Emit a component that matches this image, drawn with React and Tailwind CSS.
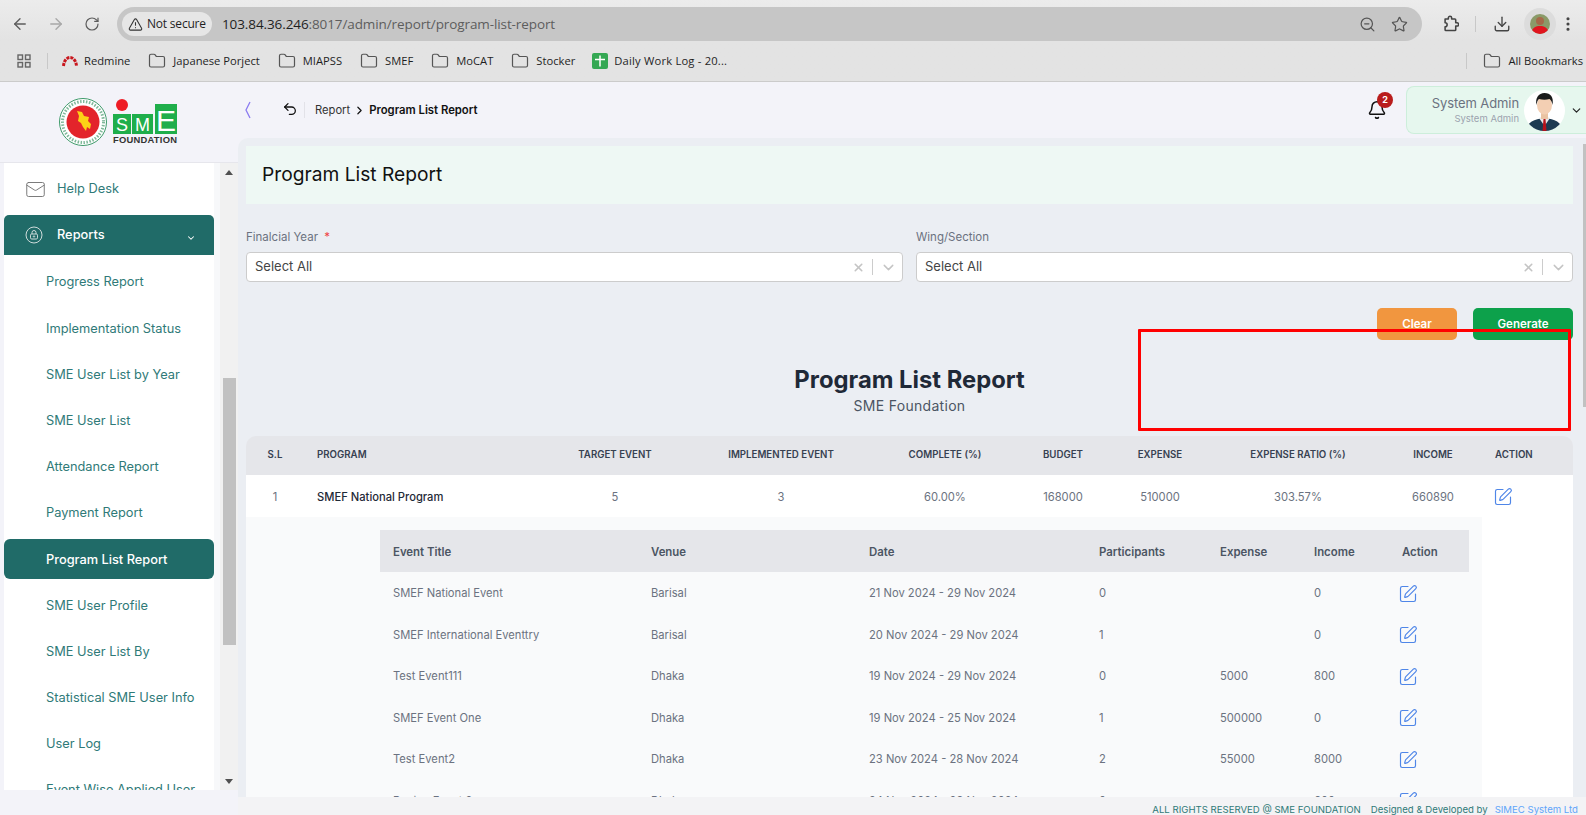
import React from "react";
import { ArrowLeft, ArrowRight, RotateCw, TriangleAlert, ZoomOut, Star, Download, EllipsisVertical, Folder, Undo2, ChevronRight, ChevronDown, Mail, X, SquarePen, Bell } from "lucide-react";

const sub = ["Progress Report","Implementation Status","SME User List by Year","SME User List","Attendance Report","Payment Report","Program List Report","SME User Profile","SME User List By","Statistical SME User Info","User Log","Event Wise Applied User"];
const mainCols = "grid grid-cols-[58px_236px_150px_182px_146px_90px_104px_172px_98px_91px]";
const subCols = "grid grid-cols-[258px_218px_230px_121px_94px_88px_80px]";
const heads = ["TARGET EVENT","IMPLEMENTED EVENT","COMPLETE (%)","BUDGET","EXPENSE","EXPENSE RATIO (%)","INCOME"];
const vals = ["5","3","60.00%","168000","510000","303.57%","660890"];
const events = [
  ["SMEF National Event","Barisal","21 Nov 2024 - 29 Nov 2024","0","","0"],
  ["SMEF International Eventtry","Barisal","20 Nov 2024 - 29 Nov 2024","1","","0"],
  ["Test Event111","Dhaka","19 Nov 2024 - 29 Nov 2024","0","5000","800"],
  ["SMEF Event One","Dhaka","19 Nov 2024 - 25 Nov 2024","1","500000","0"],
  ["Test Event2","Dhaka","23 Nov 2024 - 28 Nov 2024","2","55000","8000"],
  ["Design Event 2","Dhaka","24 Nov 2024 - 29 Nov 2024","0","","600"],
];

function Bookmark({ label, className }) {
  return (
    <div className={"flex items-center gap-[7px] " + className}>
      <Folder size={18} strokeWidth={1.6} className="text-[#555]" />
      <span>{label}</span>
    </div>
  );
}

function Logo() {
  return (
    <svg width="130" height="56" viewBox="0 0 130 56" className="ml-[57px] mt-[3px]">
      <circle cx="26" cy="26" r="23.5" fill="#fff" stroke="#3f9b6b" strokeWidth="1" />
      <circle cx="26" cy="26" r="20.5" fill="none" stroke="#7fb89a" strokeWidth="3" strokeDasharray="1.5 1.5" />
      <circle cx="26" cy="26" r="16.5" fill="#e3242b" />
      <path d="M20 15l5 1 2 4 5 1-1 4 3 3-1 5-3-2-1 4-3-4-2-4-3-2 1-5z" fill="#fcd116" />
      <circle cx="65" cy="9" r="6" fill="#ee1c25" />
      <rect x="56" y="18" width="18" height="20" fill="#1fae4b" />
      <rect x="75" y="18" width="21" height="20" fill="#1fae4b" />
      <rect x="98" y="8" width="22" height="30" fill="#1fae4b" />
      <text x="65" y="35" textAnchor="middle" fontSize="18" fill="#fff" fontFamily="Liberation Sans">S</text>
      <text x="85.5" y="35" textAnchor="middle" fontSize="18" fill="#fff" fontFamily="Liberation Sans">M</text>
      <text x="109" y="35" textAnchor="middle" fontSize="30" fill="#fff" fontFamily="Liberation Sans">E</text>
      <text x="56" y="47" fontSize="9.4" fontWeight="700" fill="#333" fontFamily="Liberation Sans" textLength="64">FOUNDATION</text>
    </svg>
  );
}

function Avatar() {
  return (
    <svg width="41" height="41" viewBox="0 0 41 41" className="shrink-0">
      <defs><clipPath id="av"><circle cx="20.5" cy="20.5" r="20.5" /></clipPath></defs>
      <g clipPath="url(#av)">
        <rect width="41" height="41" fill="#fff" />
        <path d="M2 41c1-9 8-12 18.500-13 10.500 1 17 4 18.500 13z" fill="#1d3a52" />
        <path d="M15 28l5.500 8 5.500-8-5.500-2z" fill="#e8e8e8" />
        <path d="M19.500 29h2l1 12h-4z" fill="#b5121b" />
        <rect x="17" y="21" width="7" height="8" fill="#eac3a2" />
        <ellipse cx="20.500" cy="15" rx="7.500" ry="9.500" fill="#f3cfb3" />
        <path d="M12.500 15c-1.500-7 2-12 8-12s9.500 4 8 12c-.5-3-1.500-5-3-6-3 1-7 1-10.500 0-1.500 1-2 3-2.500 6z" fill="#1b1b1b" />
      </g>
    </svg>
  );
}

function Select() {
  return (
    <div className="flex h-[30px] items-center rounded-[4px] border border-[#cccccc] bg-white pl-[8px] pr-[5px] text-[13px] text-[#444]">
      <span className="flex-1">Select All</span>
      <X size={13} strokeWidth={3} className="text-[#c4c4c4]" />
      <span className="mx-[7px] h-[16px] w-px bg-[#cccccc]" />
      <ChevronDown size={17} strokeWidth={2} className="text-[#c4c4c4]" />
    </div>
  );
}

function EditIcon() {
  return <SquarePen size={20} strokeWidth={1.4} className="text-[#4f86e8]" />;
}

export default function App() {
  return (
    <div className="flex h-[815px] w-full flex-col overflow-hidden bg-[#f3f3f9] font-['Inter',sans-serif]">
      {/* Browser chrome */}
      <div className="h-[82px] shrink-0 border-b border-[#cbcbcb] bg-linear-to-b from-[#ececec] via-[#e3e3e3] to-[#e3e3e3] font-['Open_Sans',sans-serif] text-[#1f1f1f]">
        <div className="flex h-[48px] items-center">
          <ArrowLeft size={18} strokeWidth={1.8} className="ml-[11px] text-[#5c5c5c]" />
          <ArrowRight size={18} strokeWidth={1.8} className="ml-[18px] text-[#a8a8a8]" />
          <RotateCw size={16} strokeWidth={1.8} className="ml-[19px] text-[#5c5c5c]" />
          <div className="ml-[17px] flex h-[34px] w-[1305px] items-center rounded-full bg-[#c6c6c6] pl-[5px] pr-[14px]">
            <div className="flex h-[24px] w-[90px] items-center gap-[4px] rounded-full bg-[#e6e6e6] pl-[6px] text-[12px] font-medium tracking-[-0.2px]">
              <TriangleAlert size={15} strokeWidth={1.7} className="text-[#333]" />
              <span>Not secure</span>
            </div>
            <div className="ml-[10px] flex-1 text-[13.500px] tracking-[-0.1px] text-[#5d5d5d]">
              <span className="text-[#1f1f1f]">103.84.36.246</span>:8017/admin/report/program-list-report
            </div>
            <ZoomOut size={17} strokeWidth={1.7} className="text-[#555]" />
            <Star size={17} strokeWidth={1.7} className="ml-[15px] text-[#555]" />
          </div>
          <svg width="18" height="18" viewBox="0 0 22 22" className="ml-[19px]" fill="none" stroke="#444" strokeWidth="1.900" strokeLinejoin="round">
            <path d="M5 5h4V3.500a2 2 0 0 1 4 0V5h4a1 1 0 0 1 1 1v3.500h1.500a2 2 0 0 1 0 4H18V18a1 1 0 0 1-1 1H6a1 1 0 0 1-1-1v-3.500a2.500 2.500 0 0 0 0-5z" />
          </svg>
          <span className="ml-[16px] h-[16px] w-px bg-[#c8c8c8]" />
          <Download size={18} strokeWidth={1.8} className="ml-[17px] text-[#444]" />
          <div className="ml-[13px] flex h-[32px] w-[32px] items-center justify-center rounded-full bg-[#dcdcdc]">
            <svg width="20" height="20" viewBox="0 0 20 20">
              <defs><clipPath id="pf"><circle cx="10" cy="10" r="10" /></clipPath></defs>
              <g clipPath="url(#pf)">
                <rect width="20" height="20" fill="#8a9a68" />
                <circle cx="10" cy="7" r="4" fill="#a5694a" />
                <path d="M1 20c1-7 5-8 9-8s8 1 9 8z" fill="#e0141e" />
              </g>
            </svg>
          </div>
          <EllipsisVertical size={18} strokeWidth={2.2} className="ml-[3px] text-[#444]" />
        </div>
        <div className="flex h-[26px] items-center text-[11.200px]">
          <svg width="14" height="14" viewBox="0 0 14 14" className="ml-[17px]" fill="none" stroke="#666" strokeWidth="1.4">
            <rect x="1" y="1" width="4.500" height="4.500" />
            <rect x="8.500" y="1" width="4.500" height="4.500" />
            <rect x="1" y="8.500" width="4.500" height="4.500" />
            <rect x="8.500" y="8.500" width="4.500" height="4.500" />
          </svg>
          <span className="ml-[16px] h-[16px] w-px bg-[#c8c8c8]" />
          <svg width="16" height="11" viewBox="0 0 16 11" className="ml-[14px]" fill="none">
            <path d="M1.500 10C2 4.500 5 1.500 8 1.500S14 4.500 14.500 10" stroke="#c8161d" strokeWidth="3" strokeDasharray="3 1" />
          </svg>
          <span className="ml-[6px]">Redmine</span>
          <Bookmark label="Japanese Porject" className="ml-[18px]" />
          <Bookmark label="MIAPSS" className="ml-[18px]" />
          <Bookmark label="SMEF" className="ml-[18px]" />
          <Bookmark label="MoCAT" className="ml-[18px]" />
          <Bookmark label="Stocker" className="ml-[18px]" />
          <svg width="16" height="16" viewBox="0 0 16 16" className="ml-[17px]">
            <rect width="16" height="16" rx="2" fill="#34a853" />
            <path d="M3 6.500h10M8 2.500v11" stroke="#fff" strokeWidth="1.500" />
          </svg>
          <span className="ml-[6px] flex-1 tracking-[0.2px]">Daily Work Log - 20...</span>
          <span className="h-[16px] w-px bg-[#c8c8c8]" />
          <Bookmark label="All Bookmarks" className="ml-[16px] mr-[3px]" />
        </div>
      </div>

      <div className="flex min-h-0 flex-1">
        {/* Sidebar */}
        <aside className="w-[238px] shrink-0">
          <div className="flex h-[81px] items-center border-b border-[#e6e6ec]">
            <Logo />
          </div>
          <div className="flex h-[627px]">
            <nav className="ml-[4px] w-[210px] overflow-hidden bg-white pt-[5px] text-[12.800px] text-[#2f7a78]">
              <div className="mb-[7px] flex h-[40px] items-center pt-[2px]">
                <Mail size={21} strokeWidth={1.1} className="ml-[21px] text-[#777]" />
                <span className="ml-[11px]">Help Desk</span>
              </div>
              <div className="mb-[7px] flex h-[40px] items-center rounded-t-[5px] bg-[#206b68] font-medium text-white">
                <svg width="18" height="18" viewBox="0 0 18 18" className="ml-[21px]" fill="none" stroke="#cfdcdb" strokeWidth="1">
                  <circle cx="9" cy="9" r="8" />
                  <rect x="5.500" y="8" width="7" height="5" rx="1.200" />
                  <path d="M7 8V6.500a2 2 0 0 1 4 0V8" />
                  <circle cx="9" cy="10.500" r=".7" />
                </svg>
                <span className="ml-[14px] flex-1">Reports</span>
                <ChevronDown size={10} strokeWidth={2.5} className="mr-[18px] mt-[5px]" />
              </div>
              {sub.map((s) => (
                <div
                  key={s}
                  className={
                    s === "Program List Report"
                      ? "mb-[6.200px] flex h-[40px] items-center rounded-[6px] bg-[#206b68] pl-[42px] font-medium text-white"
                      : "mb-[6.200px] flex h-[40px] items-center pl-[42px]"
                  }
                >
                  {s}
                </div>
              ))}
            </nav>
            <div className="w-[6px] bg-[#f7f8fa]" />
            <div className="flex w-[18px] flex-col items-center bg-[#f1f1f1]">
              <div className="flex h-[18px] w-full items-center justify-center">
                <svg width="8" height="5" viewBox="0 0 8 5"><path d="M4 0l4 5H0z" fill="#505050" /></svg>
              </div>
              <div className="mt-[197px] h-[267px] w-[13px] bg-[#c1c1c1]" />
              <div className="flex-1" />
              <div className="flex h-[18px] w-full items-center justify-center">
                <svg width="8" height="5" viewBox="0 0 8 5"><path d="M4 5l4-5H0z" fill="#505050" /></svg>
              </div>
            </div>
          </div>
        </aside>

        {/* Main */}
        <div className="flex min-w-0 flex-1 flex-col">
          <header className="flex h-[56px] shrink-0 items-center">
            <svg width="6" height="18" viewBox="0 0 6 18" className="ml-[7px]" fill="none" stroke="#8b7bf0" strokeWidth="1.300">
              <path d="M5 1L1 9l4 8" />
            </svg>
            <Undo2 size={16} strokeWidth={1.9} className="ml-[31px] mb-[2px] text-[#111]" />
            <span className="ml-[6px] h-[16px] w-px bg-[#e2e2e8]" />
            <span className="ml-[10px] pt-[1px] text-[11.200px] text-[#333]">Report</span>
            <ChevronRight size={13} strokeWidth={2.2} className="ml-[3px] text-[#111]" />
            <span className="ml-[3px] flex-1 pt-[1px] text-[11.300px] font-semibold text-[#111]">Program List Report</span>
            <div className="relative mr-[19px]">
              <Bell size={20} strokeWidth={1.8} className="text-[#111]" />
              <span className="absolute -right-[6px] -top-[8px] flex h-[16px] w-[16px] items-center justify-center rounded-full bg-[#b91c1c] text-[9px] font-bold text-white">2</span>
            </div>
            <div className="flex h-[48px] w-[180px] items-center rounded-l-[8px] border border-r-0 border-[#cdeedb] bg-[#e6f7ee]">
              <div className="w-[112px] text-right">
                <div className="text-[13px] leading-[18px] tracking-[-0.1px] text-[#6b7280]">System Admin</div>
                <div className="text-[9.500px] leading-[14px] text-[#9ca3af]">System Admin</div>
              </div>
              <div className="ml-[5px]"><Avatar /></div>
              <ChevronDown size={13} strokeWidth={2.2} className="ml-[5px] text-[#222]" />
            </div>
          </header>

          <main className="relative min-h-0 flex-1 overflow-hidden rounded-tl-[10px] bg-[#ebeef3] pl-[8px] pr-[13px] pt-[8px]">
            <div className="flex h-[58px] items-center bg-[#eef8f4] pb-[1px] pl-[16px] text-[19.200px] text-[#111]">Program List Report</div>

            <div className="mt-[25px] grid grid-cols-2 gap-x-[13px]">
              <div>
                <label className="block h-[16px] text-[11.500px] leading-[16px] text-[#6b7280]">Finalcial Year <span className="ml-[3px] text-[#ef4444]">*</span></label>
                <div className="mt-[7px]"><Select /></div>
              </div>
              <div>
                <label className="block h-[16px] text-[11.500px] leading-[16px] text-[#6b7280]">Wing/Section</label>
                <div className="mt-[7px]"><Select /></div>
              </div>
            </div>

            <div className="mt-[26px] flex justify-end gap-[16px]">
              <button className="h-[32px] w-[80px] rounded-[5px] bg-[#f1963f] pt-[1px] text-[11.500px] font-semibold text-white">Clear</button>
              <button className="h-[32px] w-[100px] rounded-[5px] bg-[#0da14b] pt-[1px] text-[11.500px] font-semibold text-white">Generate</button>
            </div>

            <div className="mt-[24px] text-center">
              <h1 className="h-[32px] text-[23.800px] font-bold leading-[32px] text-[#1f2937]">Program List Report</h1>
              <p className="h-[20px] text-[14px] leading-[20px] tracking-[0.3px] text-[#4b5563]">SME Foundation</p>
            </div>

            <div className="mt-[20px]">
              <div className={mainCols + " h-[39px] items-center rounded-t-[10px] bg-[#e5e6ea] text-[9.700px] font-semibold text-[#374151]"}>
                <div className="text-center">S.L</div>
                <div className="pl-[13px]">PROGRAM</div>
                {heads.map((h) => <div key={h} className="text-center">{h}</div>)}
                <div className="pl-[13px]">ACTION</div>
              </div>
              <div className={mainCols + " h-[42px] items-center bg-white pt-[2px] text-[11.200px] text-[#6b7280]"}>
                <div className="text-center">1</div>
                <div className="pl-[13px] font-medium text-[#1f2937]">SMEF National Program</div>
                {vals.map((v, i) => <div key={i} className="text-center">{v}</div>)}
                <div className="pl-[11px]"><EditIcon /></div>
              </div>
              <div className="flex bg-white">
                <div className="w-[1236px] bg-[#f9fafb] pl-[134px] pr-[13px] pt-[13px]">
                  <div className={subCols + " h-[42px] items-center bg-[#e5e6ea] pt-[3px] text-[11.400px] font-semibold text-[#4b5563]"}>
                    {["Event Title","Venue","Date","Participants","Expense","Income","Action"].map((h) => (
                      <div key={h} className="pl-[13px]">{h}</div>
                    ))}
                  </div>
                  {events.map((e) => (
                    <div key={e[0]} className={subCols + " h-[41.500px] items-center pt-[2px] text-[11.200px] text-[#6b7280]"}>
                      {e.map((c, i) => <div key={i} className="pl-[13px]">{c}</div>)}
                      <div className="pl-[9px]"><EditIcon /></div>
                    </div>
                  ))}
                </div>
              </div>
            </div>

            <div className="pointer-events-none absolute left-[900px] top-[191px] h-[102px] w-[433px] rounded-[1px] border-[3px] border-[#ff0000]" />
            <div className="absolute right-0 top-[6px] h-[263px] w-[3px] bg-[#c1c1c1]" />
          </main>

          <footer className="flex h-[18px] shrink-0 items-center justify-end bg-[#f3f3f5] pr-[8px] pt-[8px] text-[9.600px] text-[#2f7a78]">
            <span>ALL RIGHTS RESERVED @ SME FOUNDATION</span>
            <span className="ml-[10px]">Designed &amp; Developed by</span>
            <span className="ml-[7px] text-[#60a5fa]">SIMEC System Ltd</span>
          </footer>
        </div>
      </div>
    </div>
  );
}
